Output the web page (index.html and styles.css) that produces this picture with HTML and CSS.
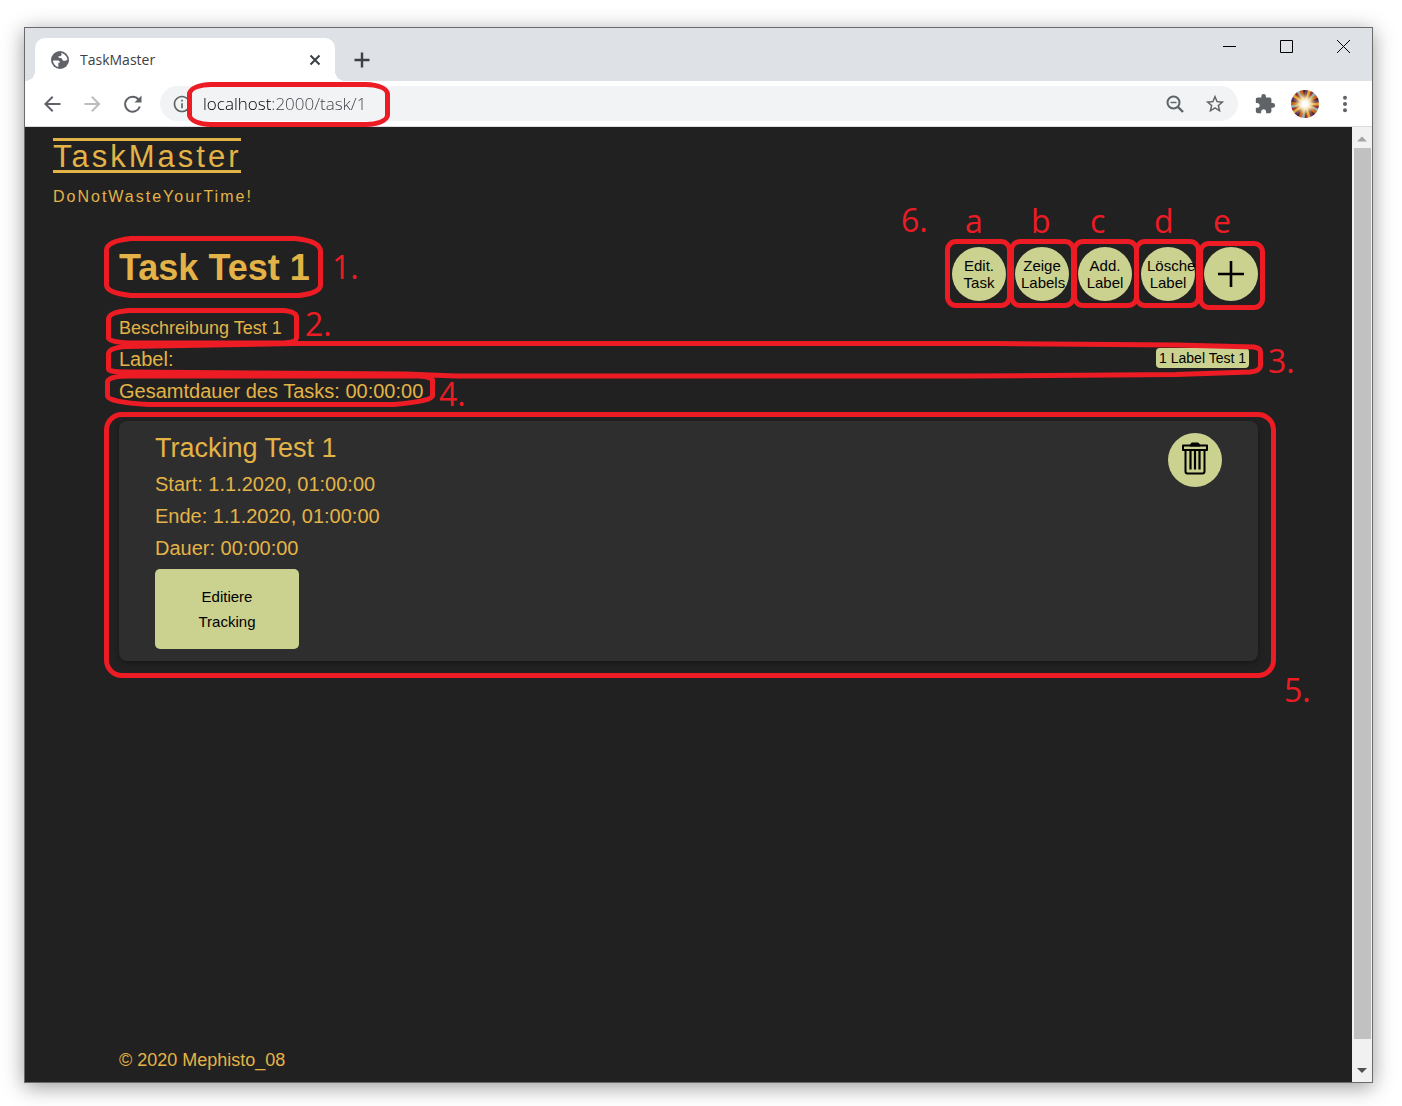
FILE: index.html
```html
<!DOCTYPE html>
<html lang="de">
<head>
<meta charset="utf-8">
<meta name="viewport" content="width=device-width, initial-scale=1">
<title>TaskMaster</title>
<link rel="stylesheet" href="styles.css">
</head>
<body>
<div class="window">
  <div class="titlebar">
    <div class="tab">
      <svg class="tab-icon" viewBox="0 0 22 22" width="22" height="22" aria-hidden="true"><circle cx="11" cy="11" r="9" fill="#5f6368"/><path fill="#fff" d="M12 4c3 .500 6 3 6.500 6.500-1 1-2.500 1.500-4 1.200-1-.300-1.300-1-1.300-2-.500-.700-1.500-.800-2.500-.700-1.200-.300-1.500-1-1.200-1.700h1.500c1.200-.300 1.600-1 1.600-2zM4 11.500h5c1.300.200 2 1 1.800 2.300H9.300v4.200C6.500 17.500 4.200 14.800 4 11.500z"/></svg>
      <span class="tab-title">TaskMaster</span>
      <button class="icon-button tab-close" aria-label="Tab schließen"><svg viewBox="0 0 12 12" width="12" height="12" stroke="#3c4043" stroke-width="2" aria-hidden="true"><path d="M1.500 1.500l9 9M10.500 1.500l-9 9"/></svg></button>
    </div>
    <button class="icon-button new-tab" aria-label="Neuer Tab"><svg viewBox="0 0 16 16" width="16" height="16" stroke="#3c4043" stroke-width="2.400" aria-hidden="true"><path d="M8 .500v15M.500 8h15"/></svg></button>
    <div class="window-controls">
      <button class="icon-button" aria-label="Minimieren"><svg viewBox="0 0 13 13" width="13" height="13" stroke="#000" fill="none" aria-hidden="true"><path d="M0 6.500h13"/></svg></button>
      <button class="icon-button" aria-label="Maximieren"><svg viewBox="0 0 13 13" width="13" height="13" stroke="#000" fill="none" aria-hidden="true"><path d="M.500.500h12v12h-12z"/></svg></button>
      <button class="icon-button" aria-label="Schließen"><svg viewBox="0 0 13 13" width="13" height="13" stroke="#000" fill="none" aria-hidden="true"><path d="M0 0l13 13M13 0L0 13"/></svg></button>
    </div>
  </div>

  <div class="toolbar">
    <button class="icon-button" aria-label="Zurück"><svg viewBox="0 0 24 24" width="24" height="24" fill="#5f6368" aria-hidden="true"><path d="M20.500 11H7.830l5.590-5.590L12 4l-8 8 8 8 1.410-1.410L7.830 13H20.500v-2z"/></svg></button>
    <button class="icon-button" aria-label="Vorwärts"><svg viewBox="0 0 24 24" width="24" height="24" fill="#babcbe" aria-hidden="true"><path d="M12.500 4l-1.410 1.410L16.670 11H4.500v2h12.170l-5.580 5.590L12.500 20l8-8z"/></svg></button>
    <button class="icon-button" aria-label="Neu laden"><svg viewBox="0 0 24 24" width="24" height="24" fill="none" stroke="#5f6368" stroke-width="2" aria-hidden="true"><path d="M19.800 14.500A7.500 7.500 0 1 1 18.500 7.500"/><path stroke="none" fill="#5f6368" d="M21.500 3.500v7h-7z"/></svg></button>
    <div class="omnibox">
      <svg viewBox="0 0 24 24" width="20" height="20" fill="#5f6368" aria-hidden="true"><path d="M11 17h2v-6h-2v6zm1-15C6.480 2 2 6.480 2 12s4.480 10 10 10 10-4.480 10-10S17.520 2 12 2zm0 18c-4.410 0-8-3.590-8-8s3.590-8 8-8 8 3.590 8 8-3.590 8-8 8zM11 9h2V7h-2v2z"/></svg>
      <input class="address" type="text" value="localhost:2000/task/1" aria-label="Adresse" spellcheck="false">
      <button class="icon-button" aria-label="Zoom"><svg viewBox="0 0 22 22" width="22" height="22" fill="none" stroke="#5f6368" stroke-width="2" aria-hidden="true"><circle cx="9.500" cy="9.500" r="6"/><path d="M14 14l5 5" stroke-width="2.400"/><path d="M6.500 9.500h6" stroke-width="1.400"/></svg></button>
      <button class="icon-button" aria-label="Lesezeichen"><svg viewBox="0 0 24 24" width="22" height="22" fill="#5f6368" aria-hidden="true"><path d="M22 9.240l-7.190-.620L12 2 9.190 8.630 2 9.240l5.460 4.730L5.820 21 12 17.270 18.180 21l-1.630-7.030L22 9.240zM12 15.400l-3.760 2.270 1-4.280-3.320-2.880 4.380-.380L12 6.100l1.710 4.040 4.380.380-3.320 2.880 1 4.280L12 15.400z"/></svg></button>
      <span class="mark mark-url"></span>
    </div>
    <button class="icon-button" aria-label="Erweiterungen"><svg viewBox="0 0 24 24" width="22" height="22" fill="#5f6368" aria-hidden="true"><path d="M20.500 11H19V7c0-1.100-.900-2-2-2h-4V3.500a2.500 2.500 0 0 0-5 0V5H4c-1.100 0-1.990.900-1.990 2v3.800H3.500c1.490 0 2.700 1.210 2.700 2.700s-1.210 2.700-2.700 2.700H2V20c0 1.100.900 2 2 2h3.800v-1.500c0-1.490 1.210-2.700 2.700-2.700 1.490 0 2.700 1.210 2.700 2.700V22H17c1.100 0 2-.900 2-2v-4h1.500a2.500 2.500 0 0 0 0-5z"/></svg></button>
    <button class="icon-button" aria-label="Profil"><span class="avatar"></span></button>
    <button class="icon-button" aria-label="Menü"><svg viewBox="0 0 24 24" width="24" height="24" fill="#5f6368" aria-hidden="true"><circle cx="12" cy="5.800" r="2"/><circle cx="12" cy="12" r="2"/><circle cx="12" cy="18.200" r="2"/></svg></button>
  </div>

  <div class="viewport">
    <div class="page">
      <header class="site-header">
        <a class="brand" href="#">TaskMaster</a>
        <p class="tagline">DoNotWasteYourTime!</p>
      </header>

      <main class="task">
        <div class="task-head">
          <h1>Task Test 1</h1>
          <div class="actions">
            <button class="round">Edit. Task</button>
            <button class="round">Zeige Labels</button>
            <button class="round">Add. Label</button>
            <button class="round">Lösche Label</button>
            <button class="round" aria-label="Tracking hinzufügen"><svg viewBox="0 0 28 28" width="28" height="28" stroke="#000" stroke-width="2.600" aria-hidden="true"><path d="M14 1v26M1 14h26"/></svg></button>
            <span class="mark ring ring-a"></span>
            <span class="mark ring ring-b"></span>
            <span class="mark ring ring-c"></span>
            <span class="mark ring ring-d"></span>
            <span class="mark ring ring-e"></span>
            <span class="note note-6">6.</span>
            <span class="note note-a">a</span>
            <span class="note note-b">b</span>
            <span class="note note-c">c</span>
            <span class="note note-d">d</span>
            <span class="note note-e">e</span>
          </div>
        </div>
        <p class="description">Beschreibung Test 1</p>
        <div class="labels">
          <span>Label:</span>
          <span class="chip">1 Label Test 1</span>
          <svg class="sketch sketch-wide" viewBox="0 0 1157 36" preserveAspectRatio="none" aria-hidden="true"><path vector-effect="non-scaling-stroke" d="M190 2.500H890L1070 4L1148 6Q1154.500 7 1154.500 11V25Q1154 30 1144 31L1070 33.500L860 35H350L300 33L20 31Q2.500 31 2.500 28V13Q2.500 7 20 5.500Z"/></svg>
          <span class="note note-3">3.</span>
        </div>
        <p class="duration">Gesamtdauer des Tasks: 00:00:00</p>

        <section class="card">
          <div>
            <h2>Tracking Test 1</h2>
            <p>Start: 1.1.2020, 01:00:00</p>
            <p>Ende: 1.1.2020, 01:00:00</p>
            <p>Dauer: 00:00:00</p>
            <button class="edit">Editiere Tracking</button>
          </div>
          <button class="round" aria-label="Tracking löschen"><svg viewBox="0 0 28 36" width="28" height="36" fill="none" stroke="#000" stroke-width="2" stroke-linejoin="round" aria-hidden="true"><path d="M2 3.500h24v4.500H2zM4.500 8v21.500q0 2 2 2h15q2 0 2-2V8"/><path stroke-width="2.200" d="M9.500 9V27.500M14 9V27.500M18.500 9V27.500"/><path fill="#000" d="M9.500 3.500l1.500-2h6l1.500 2z"/></svg></button>
          <span class="mark mark-card"></span>
          <span class="note note-5">5.</span>
        </section>

        <svg class="sketch sketch-task" viewBox="0 0 350 170" width="350" height="170" aria-hidden="true">
          <path d="M12 -8.500H176Q201 -6 201.500 4V38Q201 46 180 48.500H12Q-12 46 -12.500 38V3Q-12 -6 12 -8.500Z"/>
          <path d="M10 63.500H165Q177.500 65 177.500 70V91Q177 95 165 96H10Q-10.500 95 -10.500 91V72Q-10 65 10 63.500Z"/>
          <path d="M10 129L300 129Q313 130 313.500 133V149Q313 154 275 157.500H30Q-11.500 155 -11.500 149V135Q-11 129 10 129Z"/>
        </svg>
        <span class="note note-1">1.</span>
        <span class="note note-2">2.</span>
        <span class="note note-4">4.</span>
      </main>

      <footer class="site-footer">© 2020 Mephisto_08</footer>
    </div>
    <div class="scrollbar" aria-hidden="true">
      <svg class="arrow" viewBox="0 0 20 20" width="20" height="21"><path fill="#a3a3a3" d="M5 14l5-5 5 5z"/></svg>
      <div class="thumb"></div>
      <div class="rest"></div>
      <svg class="arrow" viewBox="0 0 20 20" width="20" height="20"><path fill="#505050" d="M5 6h10l-5 5z"/></svg>
    </div>
  </div>
</div>
</body>
</html>
```
FILE: styles.css
```css
* { box-sizing: border-box; }

body {
  margin: 0;
  min-height: 100vh;
  padding: 27px 29px 23px 24px;
  display: flex;
  background: #fff;
  font-family: "Liberation Sans", Arial, sans-serif;
}

h1, h2, p { margin: 0; font-weight: 400; }

button {
  border: 0;
  margin: 0;
  font-family: inherit;
  color: #000;
}

svg { display: block; flex: none; }

/* Browser frame */
.window {
  flex: 1;
  display: flex;
  flex-direction: column;
  border: 1px solid #6b6b6b;
  box-shadow: 0 4px 20px rgba(0, 0, 0, 0.4);
}

.icon-button {
  display: flex;
  flex: none;
  align-items: center;
  justify-content: center;
  width: 40px;
  height: 35px;
  padding: 0;
  background: none;
}

.titlebar {
  display: flex;
  height: 53px;
  padding-left: 10px;
  background: #dee1e6;
}

.tab {
  position: relative;
  display: flex;
  align-items: center;
  width: 300px;
  height: 43px;
  margin-top: 10px;
  padding: 0 0 0 14px;
  border-radius: 10px 10px 0 0;
  background: #fff;
}

.tab::before,
.tab::after {
  content: "";
  position: absolute;
  bottom: 0;
  width: 10px;
  height: 10px;
}

.tab::before {
  left: -10px;
  background: radial-gradient(circle at 0 0, #dee1e6 10px, #fff 10px);
}

.tab::after {
  right: -10px;
  background: radial-gradient(circle at 100% 0, #dee1e6 10px, #fff 10px);
}

.tab-title {
  flex: 1;
  padding-left: 9px;
  font: 14px/20px "Open Sans", sans-serif;
  color: #3c4043;
}

.new-tab { margin: 14px 0 0 7px; }

.window-controls {
  display: flex;
  margin-left: auto;
}

.window-controls .icon-button { width: 57px; height: 37px; }

.toolbar {
  display: flex;
  align-items: center;
  height: 46px;
  padding: 0 7px;
  border-bottom: 1px solid #dadce0;
  background: #fff;
}

.omnibox {
  position: relative;
  flex: 1;
  display: flex;
  align-items: center;
  height: 35px;
  margin: 0 7px 0 8px;
  padding: 0 3px 0 12px;
  border-radius: 18px;
  background: #f1f3f4;
}

.address {
  flex: 1;
  min-width: 0;
  height: 35px;
  margin-left: 11px;
  padding: 0;
  border: 0;
  outline: 0;
  font: 300 17px/24px "Open Sans", sans-serif;
  color: transparent;
  background: linear-gradient(90deg, #000 69px, #3c4046 69px);
  -webkit-background-clip: text;
  background-clip: text;
}

.avatar {
  width: 28px;
  height: 28px;
  border-radius: 50%;
  background:
    radial-gradient(circle, #fff 12%, rgba(255, 240, 190, 0.9) 28%, rgba(255, 190, 60, 0.3) 52%, transparent 68%),
    repeating-conic-gradient(#5a2a6a 0 9deg, #e0a030 14deg 22deg, #8c1f2c 28deg 34deg, #7fb6c4 40deg 46deg, #c7591c 52deg 60deg, #3a1a30 66deg 72deg);
}

.viewport { flex: 1; display: flex; }

.scrollbar {
  flex: none;
  display: flex;
  flex-direction: column;
  width: 20px;
  background: #f1f1f1;
}

.thumb { flex: 39; margin: 0 1px 0 2px; background: #c1c1c1; }
.rest { flex: 1; }

/* TaskMaster page */
.page {
  flex: 1;
  display: flex;
  flex-direction: column;
  background: #212121;
  color: #e4b347;
}

.site-header { padding: 11px 28px 0; }

.brand {
  display: inline-block;
  padding-top: 3px;
  border-top: 3px solid #e4b347;
  border-bottom: 3px solid #e4b347;
  font-size: 31px;
  line-height: 26px;
  letter-spacing: 3px;
  color: inherit;
  text-decoration: none;
  vertical-align: top;
}

.tagline {
  margin-top: 14px;
  font-size: 16px;
  line-height: 20px;
  letter-spacing: 2px;
}

.task {
  position: relative;
  margin: 40px 94px 0;
  font-size: 20px;
  line-height: 32px;
}

.task-head {
  display: flex;
  justify-content: space-between;
  margin-bottom: 12px;
}

h1 { font-size: 36px; line-height: 42px; font-weight: 700; }

.actions { position: relative; display: flex; gap: 9px; }

.round {
  flex: none;
  width: 54px;
  height: 54px;
  padding: 0 6px;
  border-radius: 50%;
  background: #cbd18f;
  font-size: 15px;
  line-height: 17px;
}

.round svg { margin: 0 auto; }

.description { font-size: 18px; line-height: 30px; }

.labels {
  position: relative;
  display: flex;
  align-items: flex-start;
  justify-content: space-between;
}

.chip {
  margin: 5px 9px 0 0;
  padding: 0 3px;
  border-radius: 4px;
  background: #cbd18f;
  color: #000;
  font-size: 14px;
  line-height: 20px;
}

.card {
  position: relative;
  display: flex;
  justify-content: space-between;
  margin-top: 14px;
  padding: 12px 36px;
  border-radius: 8px;
  background: #2e2e2e;
  box-shadow: 0 2px 5px rgba(0, 0, 0, 0.3);
}

h2 { margin-bottom: 5px; font-size: 27px; line-height: 30px; }

.edit {
  display: block;
  width: 144px;
  margin-top: 5px;
  padding: 15px 36px;
  border-radius: 5px;
  background: #cbd18f;
  font-size: 15px;
  line-height: 25px;
}

.site-footer {
  margin-top: auto;
  padding: 0 94px 9px;
  font-size: 18px;
  line-height: 26px;
}

/* Red annotations drawn over the page */
.mark {
  position: absolute;
  border: 5px solid #ed1c24;
  pointer-events: none;
}

.mark-url {
  left: 27px;
  top: -4px;
  width: 203px;
  height: 45px;
  border-radius: 24px / 12px;
  z-index: 1;
}

.ring { top: -8px; width: 67px; height: 69px; border-radius: 11px; }
.ring-a { left: -7px; }
.ring-b { left: 57px; }
.ring-c { left: 120px; }
.ring-d { left: 182px; }
.ring-e { left: 246px; top: -6px; }

.mark-card { inset: -9px -18px -17px -15px; border-radius: 18px; }

.sketch {
  position: absolute;
  overflow: visible;
  fill: none;
  stroke: #ed1c24;
  stroke-width: 5px;
  pointer-events: none;
}

.sketch-task { left: 0; top: 0; }
.sketch-wide { left: -13px; top: -2px; width: calc(100% + 18px); height: 36px; }

.note {
  position: absolute;
  font: 32px/40px "Open Sans", sans-serif;
  color: #ed1c24;
}

.note-1 { left: 213px; top: 0; }
.note-2 { left: 186px; top: 57px; }
.note-3 { left: calc(100% + 10px); top: -2px; }
.note-4 { left: 320px; top: 127px; }
.note-5 { left: calc(100% + 26px); top: 249px; }
.note-6 { left: -51px; top: -47px; }
.note-a { left: 13px; top: -46px; }
.note-b { left: 79px; top: -46px; }
.note-c { left: 138px; top: -46px; }
.note-d { left: 202px; top: -46px; }
.note-e { left: 261px; top: -46px; }
```
